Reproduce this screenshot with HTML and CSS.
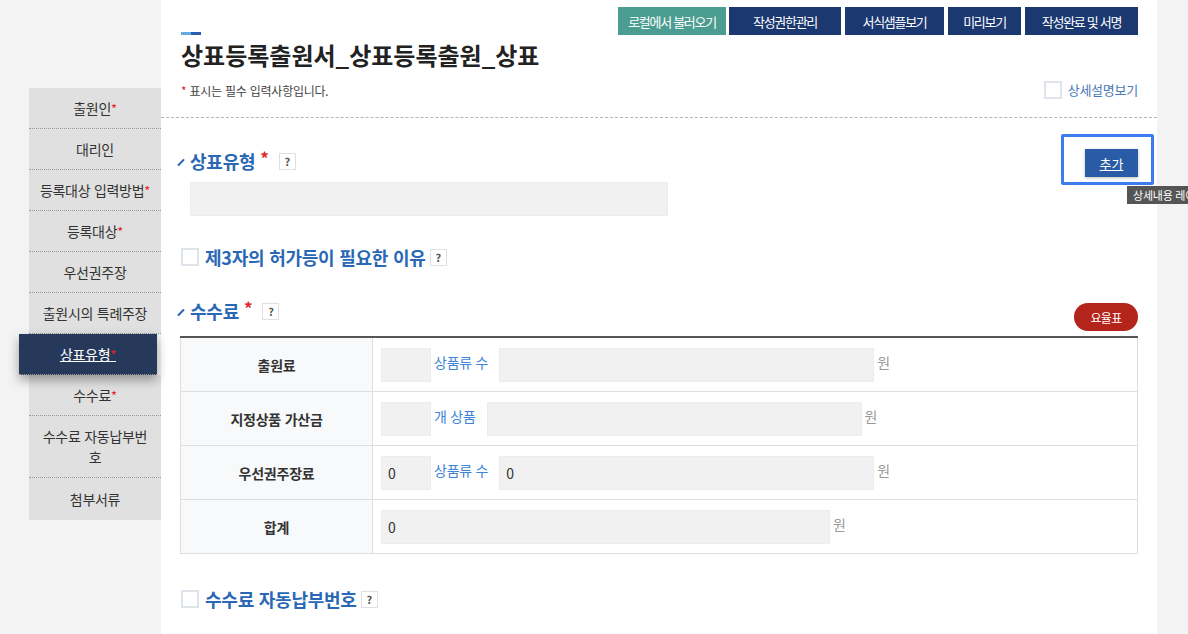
FILE: index.html
```html
<!DOCTYPE html>
<html lang="ko">

<head>
    <meta charset="UTF-8">
    <meta name="viewport" content="width=device-width, initial-scale=1.0">
    <title>상표등록출원서</title>
    <link rel="stylesheet" href="styles.css">
</head>

<body>
    <div class="page">
        <!-- left navigation -->
        <nav class="side">
            <a class="side-item">출원인<em>*</em></a>
            <a class="side-item">대리인</a>
            <a class="side-item">등록대상 입력방법<em>*</em></a>
            <a class="side-item">등록대상<em>*</em></a>
            <a class="side-item">우선권주장</a>
            <a class="side-item">출원시의 특례주장</a>
            <a class="side-item active">상표유형<em>*</em></a>
            <a class="side-item">수수료<em>*</em></a>
            <a class="side-item">수수료 자동납부번호</a>
            <a class="side-item">첨부서류</a>
        </nav>

        <main class="content">
            <header class="head">
                <div class="head-left">
                    <span class="title-bar"></span>
                    <h1 class="title">상표등록출원서_상표등록출원_상표</h1>
                    <p class="required-note"><em>*</em> 표시는 필수 입력사항입니다.</p>
                </div>
                <div class="head-right">
                    <div class="top-btns">
                        <button class="top-btn local">로컬에서 불러오기</button>
                        <button class="top-btn auth">작성권한관리</button>
                        <button class="top-btn sample">서식샘플보기</button>
                        <button class="top-btn preview">미리보기</button>
                        <button class="top-btn sign">작성완료 및 서명</button>
                    </div>
                    <label class="detail-check"><span class="check"></span>상세설명보기</label>
                </div>
            </header>

            <section class="sec sec-type">
                <div class="sec-main">
                    <h2 class="sec-title"><span class="pencil"></span>상표유형<em>*</em><span class="help">?</span></h2>
                    <div class="field field-type"></div>
                </div>
                <div class="add-wrap">
                    <button class="add-btn">추가</button>
                    <span class="tooltip">상세내용 레이어</span>
                </div>
            </section>

            <section class="sec sec-third">
                <h2 class="sec-title check-title"><span class="check"></span>제3자의 허가등이 필요한 이유<span class="help">?</span></h2>
            </section>

            <section class="sec sec-fee">
                <div class="fee-head">
                    <h2 class="sec-title"><span class="pencil"></span>수수료<em>*</em><span class="help">?</span></h2>
                    <button class="rate-btn">요율표</button>
                </div>
                <table class="fee-table">
                    <tr>
                        <th>출원료</th>
                        <td><span class="field small"></span><span class="unit-label">상품류 수</span><span class="field wide"></span><span class="won">원</span></td>
                    </tr>
                    <tr>
                        <th>지정상품 가산금</th>
                        <td><span class="field small"></span><span class="unit-label">개 상품</span><span class="field wide"></span><span class="won">원</span></td>
                    </tr>
                    <tr>
                        <th>우선권주장료</th>
                        <td><span class="field small">0</span><span class="unit-label">상품류 수</span><span class="field wide">0</span><span class="won">원</span></td>
                    </tr>
                    <tr>
                        <th>합계</th>
                        <td><span class="field total">0</span><span class="won">원</span></td>
                    </tr>
                </table>
            </section>

            <section class="sec sec-auto">
                <h2 class="sec-title check-title"><span class="check"></span>수수료 자동납부번호<span class="help">?</span></h2>
            </section>
        </main>
    </div>
</body>

</html>
```

FILE: styles.css
```css
html, body {
    overflow: hidden;
}

body {
    margin: 0;
    background: #f3f3f3;
    font-family: "Noto Sans CJK KR", "Noto Sans", sans-serif;
    color: #333;
    letter-spacing: -0.015em;
}

em {
    font-style: normal;
    color: #e3262a;
}

.page {
    display: flex;
    height: 634px;
}

/* sidebar */
.side {
    width: 132px;
    padding: 88px 0 0 29px;
    display: flex;
    flex-direction: column;
}

.side-item {
    display: flex;
    align-items: center;
    justify-content: center;
    text-align: center;
    min-height: 40px;
    padding: 0 10px;
    background: #e0e0e0;
    border-bottom: 1px dotted #9a9a9a;
    font-size: 14px;
    line-height: 21px;
    color: #333;
    letter-spacing: -0.02em;
}

.side-item:last-child {
    border-bottom: none;
    min-height: 42px;
}

.side-item:nth-child(9) {
    min-height: 61px;
}

.side-item.active {
    position: relative;
    margin: 0 4px 0 -10px;
    background: #26395a;
    color: #fff;
    text-decoration: underline;
    box-shadow: 0 5px 10px rgba(0, 0, 0, 0.35);
}

.side-item em {
    font-size: 13px;
}

/* main panel */
.content {
    width: 996px;
    background: #fff;
    padding: 0 19px;
    box-sizing: border-box;
}

.head {
    display: flex;
    justify-content: space-between;
    margin: 0 -19px;
    padding: 0 19px 0 20px;
    height: 117px;
    border-bottom: 1px dashed #b5b5b5;
}

.head-left {
    padding-top: 32px;
}

.title-bar {
    display: block;
    width: 20px;
    height: 3px;
    background: linear-gradient(90deg, #6aaae3 50%, #2a5fb2 50%);
}

.title {
    margin: 2px 0 0;
    font-size: 24px;
    line-height: 36px;
    font-weight: 700;
    color: #222;
    letter-spacing: 0;
}

.required-note {
    margin: 9px 0 0;
    font-size: 12px;
    line-height: 18px;
    color: #444;
}

.head-right {
    display: flex;
    flex-direction: column;
    align-items: flex-end;
    padding-top: 7px;
}

.top-btns {
    display: flex;
    gap: 4px;
}

.top-btn {
    height: 28px;
    padding: 0;
    border: none;
    background: #1b3870;
    color: #fff;
    font-family: inherit;
    font-size: 13px;
    letter-spacing: -0.1em;
}

.top-btn.local {
    width: 108px;
    margin-right: -1px;
    background: #4b9d91;
}

.top-btn.auth { width: 112px; }
.top-btn.sample { width: 99px; }
.top-btn.preview { width: 73px; }
.top-btn.sign { width: 113px; }

.detail-check {
    display: flex;
    align-items: center;
    gap: 6px;
    margin-top: 45px;
    font-size: 13px;
    color: #4b78b8;
}

.check {
    display: inline-block;
    width: 14px;
    height: 14px;
    border: 2px solid #dfe4ea;
    background: #fff;
    flex-shrink: 0;
}

/* sections */
.sec-title {
    display: flex;
    align-items: center;
    margin: 0;
    font-size: 18px;
    line-height: 24px;
    font-weight: 700;
    color: #2a68b5;
}

.sec-title em {
    margin: 0 0 0 5px;
    align-self: flex-start;
    font-size: 17px;
    line-height: 18px;
}

.pencil {
    width: 2px;
    height: 9px;
    margin: 3px 8px 0 4px;
    background: #2a68b5;
    transform: rotate(45deg);
    border-radius: 1px;
}

.help {
    display: inline-flex;
    align-items: center;
    justify-content: center;
    width: 15px;
    height: 15px;
    margin-left: 10px;
    border: 1px solid #e0e0e0;
    background: #fff;
    font-size: 11px;
    font-weight: 700;
    color: #555;
}

.sec-type {
    display: flex;
    justify-content: space-between;
    padding-top: 31px;
}

.sec-type .sec-title {
    margin-left: -4px;
}

.field {
    display: inline-block;
    box-sizing: border-box;
    background: #f1f1f1;
    border: 1px solid #ececec;
    font-size: 14px;
    line-height: 32px;
    padding-left: 6px;
    color: #333;
    vertical-align: middle;
}

.field-type {
    display: block;
    width: 478px;
    height: 34px;
    margin: 9px 0 0 10px;
}

.add-wrap {
    position: relative;
    margin: -15px -16px 0 0;
    padding: 12px 13px 5px 21px;
    border: 3px solid #3b7df0;
    border-radius: 2px;
    height: 28px;
}

.add-btn {
    width: 53px;
    height: 28px;
    border: none;
    background: #2a5ba6;
    color: #fff;
    font-family: inherit;
    font-size: 13px;
    text-decoration: underline;
    box-shadow: 0 1px 3px rgba(0, 0, 0, 0.25);
}

.tooltip {
    position: absolute;
    left: 63px;
    top: 49px;
    padding: 0 6px;
    background: #555;
    color: #fff;
    font-size: 11px;
    line-height: 18px;
    white-space: nowrap;
}

.sec-third {
    padding-top: 29px;
}

.check-title .check {
    margin: 0 6px 0 1px;
}

.check-title .help {
    margin-left: 4px;
}

.sec-fee {
    padding-top: 30px;
}

.fee-head {
    display: flex;
    justify-content: space-between;
    align-items: flex-start;
}

.fee-head .sec-title {
    margin-left: -4px;
}

.rate-btn {
    margin-top: 4px;
    width: 64px;
    height: 28px;
    border: none;
    border-radius: 14px;
    background: #b3241b;
    color: #fff;
    font-family: inherit;
    font-size: 12px;
    letter-spacing: -0.06em;
}

.fee-table {
    width: 958px;
    margin: 5px 0 0 0;
    border-collapse: collapse;
    border-top: 2px solid #555;
}

.fee-table th,
.fee-table td {
    height: 53px;
    border: 1px solid #dedede;
    padding: 0 0 0 8px;
    font-size: 14px;
}

.fee-table th {
    width: 191px;
    background: #f8f9fa;
    font-weight: 700;
    color: #333;
    padding: 0;
}

.field.small {
    width: 50px;
    height: 34px;
}

.unit-label {
    display: inline-block;
    margin: 0 11px 0 3px;
    color: #3d84d6;
    vertical-align: middle;
    line-height: 20px;
    position: relative;
    top: -3px;
}

.field.wide {
    width: 375px;
    height: 34px;
}

.field.total {
    width: 449px;
    height: 34px;
}

.won {
    display: inline-block;
    margin-left: 3px;
    color: #999;
    vertical-align: middle;
    position: relative;
    top: -3px;
}

.sec-auto {
    padding-top: 33px;
}
```
